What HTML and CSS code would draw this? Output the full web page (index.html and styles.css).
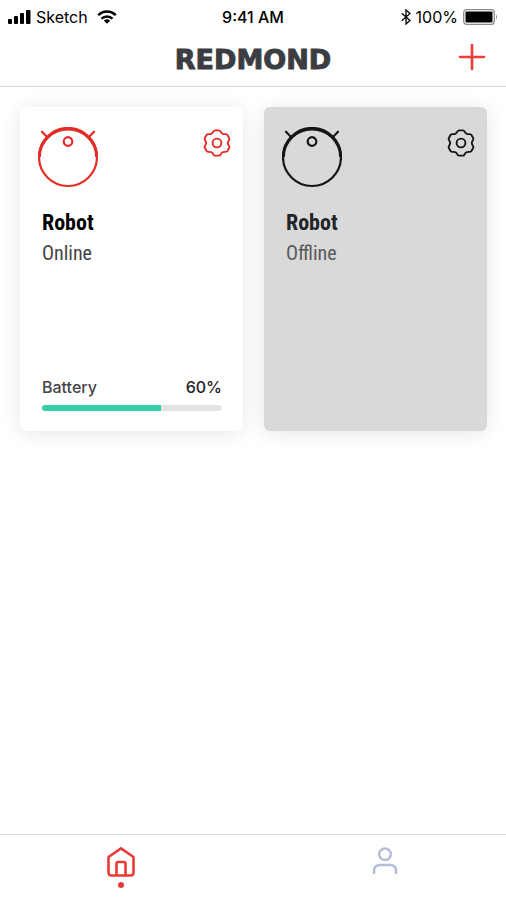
FILE: index.html
```html
<!DOCTYPE html>
<html lang="en">
<head>
<meta charset="utf-8">
<meta name="viewport" content="width=device-width, initial-scale=1">
<title>Redmond</title>
<link rel="stylesheet" href="styles.css">
</head>
<body>
<svg class="sprite" aria-hidden="true">
  <symbol id="robot" viewBox="-30 -30 60 61">
    <g fill="none" stroke="currentColor" stroke-width="2.2">
      <circle r="29"/>
      <path d="M-28.6 0A28.6 28 0 0 1 28.6 0" stroke-width="3"/>
      <circle cy="-15.5" r="4.3"/>
      <path d="M-26-25.3L-20.5-19.6M26-25.3L20.5-19.6" stroke-linecap="round"/>
    </g>
  </symbol>
  <symbol id="gear" viewBox="-14 -14 28 28">
    <g fill="none" stroke="currentColor" stroke-width="1.9" stroke-linejoin="round">
      <path d="M-2-12.6H2C3.5-12.6 3.7-10.3 5.4-9.3C7.1-8.3 9.5-9.5 10.3-8.2L12.3-4.8C13-3.5 10.8-2 10.8 0C10.8 2 13 3.5 12.3 4.8L10.3 8.2C9.5 9.5 7.1 8.3 5.4 9.3C3.7 10.3 3.5 12.6 2 12.6H-2C-3.5 12.6-3.7 10.3-5.4 9.3C-7.1 8.3-9.5 9.5-10.3 8.2L-12.3 4.8C-13 3.5-10.8 2-10.8 0C-10.8-2-13-3.5-12.3-4.8L-10.3-8.2C-9.5-9.5-7.1-8.3-5.4-9.3C-3.7-10.3-3.5-12.6-2-12.6Z"/>
      <circle r="4.4"/>
    </g>
  </symbol>
</svg>
<div class="app">
  <header class="header">
    <div class="status">
      <div class="status-side">
        <svg width="23" height="14" viewBox="0 0 23 14" aria-hidden="true"><rect y="9" width="4" height="5" rx="1"/><rect x="6" y="6" width="4" height="8" rx="1"/><rect x="12" y="3" width="4" height="11" rx="1"/><rect x="18" width="4.5" height="14" rx="1"/></svg>
        <span>Sketch</span>
        <svg class="wifi" width="20" height="14" viewBox="0 0 20 14" aria-hidden="true"><g fill="none" stroke="#000" stroke-width="2.5"><path d="M1.2 5.2C6.3.1 13.7.1 18.8 5.2"/><path d="M4.5 8.7C7.7 5.6 12.3 5.6 15.5 8.7"/></g><path d="M6.9 10.7Q10 8 13.1 10.7L10 13.8Z"/></svg>
      </div>
      <span class="time">9:41 AM</span>
      <div class="status-side status-end">
        <svg width="10" height="16" viewBox="0 0 10 16" fill="none" stroke="#000" stroke-width="1.3" aria-hidden="true"><path d="M.7 4.3L9 11.5L5 15V1L9 4.5L.7 11.7"/></svg>
        <span>100%</span>
        <svg width="35" height="16" viewBox="0 0 35 16" aria-hidden="true"><rect x=".7" y=".7" width="30.6" height="14.6" rx="3" fill="none" stroke="#8a8a8a" stroke-width="1.3"/><rect x="2.5" y="2.5" width="27" height="11" rx="1"/><path d="M33 5.5Q35 8 33 10.5Z" fill="#8a8a8a"/></svg>
      </div>
    </div>
    <div class="nav">
      <h1 class="logo">REDMOND</h1>
      <button class="add" type="button" aria-label="Add device"><svg width="28" height="28" viewBox="0 0 28 28" fill="none" stroke="currentColor" stroke-width="2.7" stroke-linecap="round"><path d="M14 2V26M2 14H26"/></svg></button>
    </div>
  </header>
  <main class="devices">
    <article class="card">
      <div class="card-top">
        <svg class="robot" aria-hidden="true"><use href="#robot"/></svg>
        <button class="settings" type="button" aria-label="Settings"><svg width="28" height="28"><use href="#gear"/></svg></button>
      </div>
      <h2 class="name">Robot</h2>
      <p class="state">Online</p>
      <div class="battery">
        <div class="battery-row"><span>Battery</span><span class="percent">60%</span></div>
        <div class="track"><div class="fill" style="width:66%"></div></div>
      </div>
    </article>
    <article class="card offline">
      <div class="card-top">
        <svg class="robot" aria-hidden="true"><use href="#robot"/></svg>
        <button class="settings" type="button" aria-label="Settings"><svg width="28" height="28"><use href="#gear"/></svg></button>
      </div>
      <h2 class="name">Robot</h2>
      <p class="state">Offline</p>
    </article>
  </main>
  <nav class="tabs">
    <a class="tab active" href="#home" aria-label="Home" aria-current="page"><svg width="28" height="31" viewBox="0 0 28 31" fill="none" stroke="currentColor" stroke-width="2.6" stroke-linejoin="round"><path d="M1.5 10L14 1.4L26.5 10V25.5Q26.5 28.5 23.5 28.5H4.5Q1.5 28.5 1.5 25.5Z"/><path d="M9.5 28.5V16.5Q9.5 15 11 15H17Q18.5 15 18.5 16.5V28.5"/></svg></a>
    <a class="tab" href="#profile" aria-label="Profile"><svg width="26" height="28" viewBox="0 0 26 28" fill="none" stroke="currentColor" stroke-width="2.5"><circle cx="13" cy="7.3" r="5.8"/><path d="M2 27V24Q2 18 8 18H18Q24 18 24 24V27"/></svg></a>
  </nav>
</div>
</body>
</html>
```

FILE: styles.css
```css
* {
  box-sizing: border-box;
}

body {
  margin: 0;
  background: #fff;
  color: #000;
  font-family: Inter, "Liberation Sans", sans-serif;
}

h1,
h2,
p {
  margin: 0;
}

button {
  display: flex;
  padding: 0;
  border: 0;
  background: none;
  color: inherit;
  cursor: pointer;
}

svg {
  display: block;
  flex: none;
}

.sprite {
  position: absolute;
  width: 0;
  height: 0;
}

.app {
  display: flex;
  flex-direction: column;
  min-height: 100vh;
}

.header {
  border-bottom: 1px solid #d8d8d8;
}

.status {
  display: grid;
  grid-template-columns: 1fr auto 1fr;
  align-items: center;
  height: 34px;
  padding: 0 8px;
  font-size: 16px;
}

.status-side {
  display: flex;
  align-items: center;
  gap: 5px;
}

.status-end {
  justify-content: flex-end;
}

.wifi {
  margin-left: 4px;
}

.time {
  font-weight: 500;
}

.nav {
  display: grid;
  grid-template-columns: 1fr auto 1fr;
  align-items: center;
  height: 52px;
  padding: 0 20px;
}

.logo {
  grid-column: 2;
  color: #3b3d42;
  font-family: "DejaVu Sans", sans-serif;
  font-size: 27px;
  font-weight: 700;
  line-height: 32px;
  -webkit-text-stroke: 1px #3b3d42;
}

.add {
  justify-self: end;
  margin-bottom: 6px;
  color: #ef3e3b;
}

.devices {
  display: grid;
  grid-template-columns: 1fr 1fr;
  flex: 1;
  align-content: start;
  gap: 21px;
  padding: 20px 19px 20px 20px;
}

.card {
  display: flex;
  flex-direction: column;
  min-height: 324px;
  padding: 20px 21px 20px 22px;
  border-radius: 6px;
  background: #fff;
  box-shadow: 0 2px 20px rgba(0, 0, 0, 0.1);
}

.card-top {
  display: flex;
  justify-content: space-between;
  margin: 0 -9px 0 -4px;
  color: #e42b27;
}

.robot {
  width: 60px;
  height: 61px;
}

.settings {
  align-self: flex-start;
  margin-top: 2px;
}

.name {
  margin-top: 21px;
  font-family: "Roboto Condensed", "Liberation Sans Narrow", Roboto, sans-serif;
  font-size: 22px;
  font-weight: 700;
  line-height: 28px;
}

.state {
  margin-top: 2px;
  color: #444;
  font-family: "Roboto Condensed", "Liberation Sans Narrow", Roboto, sans-serif;
  font-size: 20px;
  font-weight: 400;
  line-height: 28px;
}

.battery {
  margin-top: auto;
}

.battery-row {
  display: flex;
  justify-content: space-between;
  color: #444;
  font-size: 16px;
  font-weight: 500;
  line-height: 24px;
}

.percent {
  color: #222;
}

.track {
  height: 6px;
  margin-top: 6px;
  overflow: hidden;
  border-radius: 3px;
  background: #e4e4e4;
}

.fill {
  height: 100%;
  background: #35d0a5;
}

.offline {
  background: #d9d9d9;
}

.offline .card-top {
  color: #161616;
}

.offline .name {
  color: #222426;
}

.offline .state {
  color: #5a5a5a;
}

.tabs {
  display: flex;
  justify-content: space-between;
  height: 66px;
  padding: 0 18%;
  border-top: 1px solid #dcdcdc;
}

.tab {
  display: flex;
  flex-direction: column;
  align-items: center;
  width: 60px;
  padding-top: 12px;
  color: #b4bfd6;
}

.active {
  color: #e93b38;
}

.active::after {
  width: 6px;
  height: 6px;
  margin-top: 4px;
  border-radius: 50%;
  background: currentColor;
  content: "";
}
```
